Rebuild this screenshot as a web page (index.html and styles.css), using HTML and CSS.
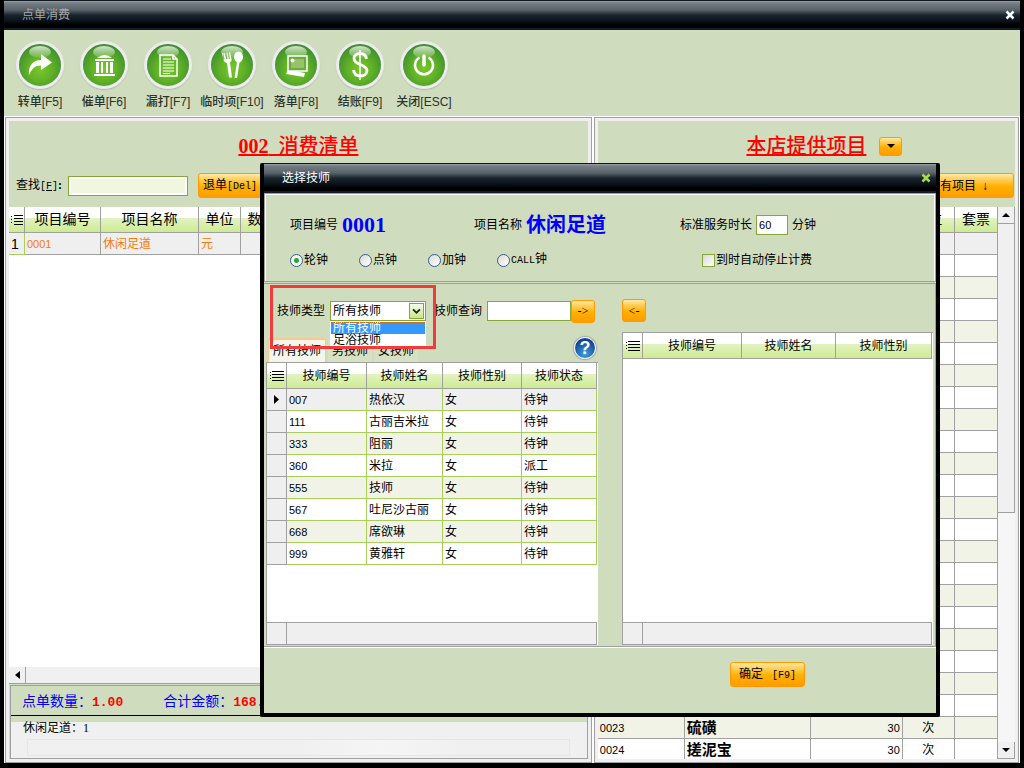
FILE: index.html
```html
<!DOCTYPE html>
<html lang="zh-CN">
<head>
    <meta charset="UTF-8">
    <title>点单消费</title>
    <link rel="stylesheet" href="styles.css">
</head>
<body>

<div class="app">
    <header class="titlebar">
        <h1>点单消费</h1>
        <button class="close" aria-label="关闭窗口">
            <svg width="10" height="10" viewBox="0 0 10 10"><path d="M1.5 1.5l7 7M8.5 1.5l-7 7"/></svg>
        </button>
    </header>

    <nav class="toolbar">
        <button class="tool">
            <span class="orb">
                <svg width="42" height="42" viewBox="0 0 42 42"><path fill="#fff" d="M10 31c-1-9 4-15 12-15v-6l11 8.500-11 7.500v-4.500c-6 0-9 3-12 9.500z"/></svg>
            </span>
            转单[F5]
        </button>
        <button class="tool">
            <span class="orb">
                <svg width="42" height="42" viewBox="0 0 42 42" fill="#fff"><path d="M14 14q7.500-6 15 0zM12 15h19v2H12zM13 18h3v11h-3zM18 18h2v11h-2zM23 18h2v11h-2zM27 18h3v11h-3zM11 30h21v2H11z"/></svg>
            </span>
            催单[F6]
        </button>
        <button class="tool">
            <span class="orb">
                <svg width="42" height="42" viewBox="0 0 42 42" fill="none" stroke="#fff" stroke-width="1.500"><path d="M13 11h13l4 4v17H13zM26 11v4h4"/><path stroke-width="1.200" d="M16 15h8M16 18h11M16 21h11M16 24h11M16 27h11M16 29.500h7"/></svg>
            </span>
            漏打[F7]
        </button>
        <button class="tool">
            <span class="orb">
                <svg width="42" height="42" viewBox="0 0 42 42" fill="#fff"><path d="M11 9l1.500 7q1 3 3.500 3l2 14.500h3L19 18.500q2-1 1.500-3.500L19 8l-1 .300.800 6.700h-1L16.500 8.500l-1 .200 1 6.500h-1L13.500 9l-1 .200 1 6.500-1 .100L12 9z"/><ellipse cx="27.500" cy="13" rx="4.500" ry="5.500"/><path d="M26 18h2.500L26 34h-2.500z"/></svg>
            </span>
            临时项[F10]
        </button>
        <button class="tool">
            <span class="orb">
                <svg width="42" height="42" viewBox="0 0 42 42"><path fill="#fff" d="M13 26l-2 4 18 3 1-4z"/><path fill="#6cab3c" stroke="#fff" stroke-width="1.500" d="M13 12h19v15H13z"/><path fill="#94c46a" d="M16 15h13v9H16z"/><circle cx="17.500" cy="16.500" r="2" fill="#fff"/></svg>
            </span>
            落单[F8]
        </button>
        <button class="tool">
            <span class="orb">
                <svg width="42" height="42" viewBox="0 0 42 42" fill="none" stroke="#fff"><path stroke-width="1.500" d="M21 6v30"/><path stroke-width="2.800" d="M27.500 15c-.500-4-3-5.500-6.500-5.500-3.500 0-6 2-6 5 0 7 13 5.500 13 12 0 3.500-3 5.500-6.500 5.500-4 0-6.500-2-7-6"/></svg>
            </span>
            结账[F9]
        </button>
        <button class="tool">
            <span class="orb">
                <svg width="42" height="42" viewBox="0 0 42 42" fill="none" stroke="#fff"><path stroke-width="2.500" d="M16.500 13.500a9 9 0 1 0 9 0"/><path stroke-width="3.500" stroke-linecap="round" d="M21 12v9"/></svg>
            </span>
            关闭[ESC]
        </button>
    </nav>

    <main class="panels">
        <section class="panel">
            <div class="panel-head">
                <h2><b>002</b>&nbsp; 消费清单</h2>
                <div class="search">
                    <label for="find">查找<span class="mono">[<u>F</u>]</span><b>:</b></label>
                    <input id="find" type="text">
                    <button class="btn">退单<span class="mono">[Del]</span></button>
                </div>
            </div>
            <div class="grid-body">
                <table class="grid grid-main">
                    <colgroup><col class="w16"><col class="w76"><col class="w98"><col class="w42"><col class="w42"><col></colgroup>
                    <thead>
                        <tr>
                            <th><svg class="lines" width="12" height="12" viewBox="0 0 12 12"><path d="M0 2.500h1M0 5.500h1M0 8.500h1M3 1.500h9M3 4.500h9M3 7.500h9M3 10.500h9"/></svg></th>
                            <th>项目编号</th><th>项目名称</th><th>单位</th><th>数量</th><th></th>
                        </tr>
                    </thead>
                    <tbody>
                        <tr class="current"><td class="rowno">1</td><td class="num">0001</td><td>休闲足道</td><td>元</td><td></td><td></td></tr>
                    </tbody>
                </table>
            </div>
            <div class="hscroll"><button class="arrow" aria-label="向左滚动"><svg width="5" height="8" viewBox="0 0 5 8"><path d="M5 0v8L0 4z"/></svg></button></div>
            <div class="summary">
                <p class="totals">
                    <span>点单数量：<b>1.00</b></span>
                    <span>合计金额：<b>168.00</b></span>
                </p>
                <p class="detail">休闲足道：1</p>
                <div class="status"></div>
            </div>
        </section>

        <section class="panel">
            <div class="panel-head">
                <div class="shop">
                    <h2>本店提供项目</h2>
                    <button class="btn drop" aria-label="展开"><svg width="8" height="4" viewBox="0 0 8 4"><path d="M0 0h8L4 4z"/></svg></button>
                </div>
                <div class="search search-end">
                    <button class="btn all">所有项目 &nbsp;↓</button>
                </div>
            </div>
            <div class="items">
                <div class="grid-body">
                    <table class="grid grid-main">
                        <colgroup><col class="w86"><col class="w126"><col class="w92"><col class="w52"><col></colgroup>
                        <thead>
                            <tr><th>项目编号</th><th>项目名称</th><th>单价</th><th>单位</th><th>套票</th></tr>
                        </thead>
                        <tbody id="items"></tbody>
                    </table>
                </div>
                <div class="vscroll">
                    <button class="arrow" aria-label="向上滚动"><svg width="8" height="4" viewBox="0 0 8 4"><path d="M0 4h8L4 0z"/></svg></button>
                    <div class="thumb"></div>
                    <div class="track"></div>
                    <button class="arrow" aria-label="向下滚动"><svg width="8" height="4" viewBox="0 0 8 4"><path d="M0 0h8L4 4z"/></svg></button>
                </div>
            </div>
        </section>
    </main>
</div>

<div class="dialog" role="dialog" aria-labelledby="dialogTitle">
    <header class="titlebar">
        <h2 id="dialogTitle">选择技师</h2>
        <button class="close close-green" aria-label="关闭">
            <svg width="10" height="10" viewBox="0 0 10 10"><path d="M1.500 1.500l7 7M8.500 1.500l-7 7"/></svg>
        </button>
    </header>

    <form class="options">
        <div class="facts">
            <div>项目编号 <strong class="code">0001</strong></div>
            <div>项目名称 <strong>休闲足道</strong></div>
            <div class="duration">
                <label for="minutes">标准服务时长</label>
                <input id="minutes" class="num" type="text" value="60">
                <span>分钟</span>
            </div>
        </div>
        <div class="modes">
            <label><input type="radio" name="mode" checked>轮钟</label>
            <label><input type="radio" name="mode">点钟</label>
            <label><input type="radio" name="mode">加钟</label>
            <label><input type="radio" name="mode"><span><span class="mono">CALL</span>钟</span></label>
            <label class="autostop"><input type="checkbox">到时自动停止计费</label>
        </div>
    </form>

    <div class="picker">
        <div class="side side-left">
            <div class="filters">
                <label for="type">技师类型</label>
                <div class="combo">
                    <select id="type">
                        <option>所有技师</option>
                        <option>足浴技师</option>
                    </select>
                    <svg class="chevron" width="15" height="16" viewBox="0 0 15 16"><path d="M3.500 6l4 4 4-4"/></svg>
                    <ul class="list">
                        <li class="selected">所有技师</li>
                        <li>足浴技师</li>
                    </ul>
                </div>
                <label for="query">技师查询</label>
                <input id="query" type="text">
                <button class="btn move">-&gt;</button>
                <div class="marker"></div>
            </div>
            <div class="tabs">
                <button class="tab active">所有技师</button>
                <button class="tab">男技师</button>
                <button class="tab">女技师</button>
                <button class="help" aria-label="帮助">?</button>
            </div>
            <div class="tablebox">
                <table class="grid grid-staff">
                    <colgroup><col class="w20"><col class="w80"><col class="w76"><col class="w79"><col></colgroup>
                    <thead>
                        <tr>
                            <th><svg class="lines" width="14" height="12" viewBox="0 0 14 12"><path d="M0 2.500h1M0 5.500h1M0 8.500h1M2 1.500h12M2 4.500h12M2 7.500h12M2 10.500h12"/></svg></th>
                            <th>技师编号</th><th>技师姓名</th><th>技师性别</th><th>技师状态</th>
                        </tr>
                    </thead>
                    <tbody>
                        <tr><td><svg width="5" height="9" viewBox="0 0 5 9"><path d="M0 0v9l5-4.500z"/></svg></td><td class="num">007</td><td>热依汉</td><td>女</td><td>待钟</td></tr>
                        <tr><td></td><td class="num">111</td><td>古丽吉米拉</td><td>女</td><td>待钟</td></tr>
                        <tr><td></td><td class="num">333</td><td>阻丽</td><td>女</td><td>待钟</td></tr>
                        <tr><td></td><td class="num">360</td><td>米拉</td><td>女</td><td>派工</td></tr>
                        <tr><td></td><td class="num">555</td><td>技师</td><td>女</td><td>待钟</td></tr>
                        <tr><td></td><td class="num">567</td><td>吐尼沙古丽</td><td>女</td><td>待钟</td></tr>
                        <tr><td></td><td class="num">668</td><td>席欲琳</td><td>女</td><td>待钟</td></tr>
                        <tr><td></td><td class="num">999</td><td>黄雅轩</td><td>女</td><td>待钟</td></tr>
                    </tbody>
                </table>
                <div class="tablefoot"><span></span></div>
            </div>
        </div>

        <div class="side side-right">
            <div class="back">
                <button class="btn move">&lt;-</button>
            </div>
            <div class="tablebox">
                <table class="grid grid-staff">
                    <colgroup><col class="w20"><col class="w99"><col class="w94"><col></colgroup>
                    <thead>
                        <tr>
                            <th><svg class="lines" width="14" height="12" viewBox="0 0 14 12"><path d="M0 2.500h1M0 5.500h1M0 8.500h1M2 1.500h12M2 4.500h12M2 7.500h12M2 10.500h12"/></svg></th>
                            <th>技师编号</th><th>技师姓名</th><th>技师性别</th>
                        </tr>
                    </thead>
                </table>
                <div class="tablefoot"><span></span></div>
            </div>
        </div>
    </div>

    <footer class="actions">
        <button class="btn ok">确定 <span class="mono">&nbsp;[F9]</span></button>
    </footer>
</div>

<script>
    const items = {
        '0023': ['硫磺', 30, '次'],
        '0024': ['搓泥宝', 30, '次']
    };
    const body = document.getElementById('items');

    for (let i = 1; i <= 24; i++) {
        const code = String(i).padStart(4, '0');
        const [name, price, unit] = items[code] || ['', '', ''];
        const row = body.insertRow();
        [code, name, price, unit, ''].forEach(text => {
            row.insertCell().textContent = text;
        });
        row.cells[0].className = 'num';
        row.cells[2].className = 'num';
    }
</script>

</body>
</html>
```
FILE: styles.css
```css
* {
    box-sizing: border-box;
}

body {
    margin: 0;
    font-family: "Liberation Serif", "Noto Sans CJK SC", serif;
    font-size: 12px;
    line-height: 16px;
    color: #000;
    background: #000;
}

h1, h2, p, ul {
    margin: 0;
    padding: 0;
}

button, input, select {
    font: inherit;
    color: inherit;
    margin: 0;
    padding: 0;
}

.mono {
    font-family: "Liberation Mono", monospace;
    font-size: 10px;
}

.num {
    font-family: "Liberation Sans", sans-serif;
    font-size: 11px;
}

.app {
    display: flex;
    flex-direction: column;
    height: 100vh;
    border: solid #000;
    border-width: 0 4px 5px;
    background: #cfdcbd;
}

/* title bars */
.titlebar {
    display: flex;
    align-items: center;
    justify-content: space-between;
    height: 30px;
    flex: none;
    padding: 0 5px 0 18px;
    border-top: 1px solid #10161e;
    border-bottom: 2px solid #141c29;
    background: linear-gradient(#9aa1a9 0, #757d84 2px, #59626a 9px, #19252f 14px, #0b1219 20px, #000 24px);
}

.titlebar h1,
.titlebar h2 {
    font-size: 12px;
    font-weight: normal;
    color: #a3a7ab;
}

.close {
    display: flex;
    border: 0;
    background: none;
}

.close path {
    fill: none;
    stroke: #fff;
    stroke-width: 2.5;
}

.close-green path {
    stroke: #a8dc4a;
}

/* toolbar */
.toolbar {
    display: flex;
    flex: none;
    height: 86px;
    padding: 11px 4px 0;
}

.tool {
    display: flex;
    flex-direction: column;
    align-items: center;
    gap: 5px;
    width: 64px;
    border: 0;
    background: none;
    color: #2c3327;
    font-family: "Liberation Sans", "Noto Sans CJK SC", sans-serif;
    font-weight: 500;
    white-space: nowrap;
}

.orb {
    position: relative;
    width: 48px;
    height: 48px;
    border: 3px solid #ececee;
    border-radius: 50%;
    background: radial-gradient(circle at 50% 60%, #7ac62c 0, #62b426 35%, #3a8a30 80%, #22662a 100%);
    box-shadow: 0 1px 1px #b0b8a8;
}

.orb::before {
    content: "";
    position: absolute;
    top: 2px;
    left: 10px;
    width: 22px;
    height: 12px;
    border-radius: 50%;
    background: linear-gradient(rgba(255, 255, 255, 0.75), rgba(255, 255, 255, 0.1));
}

.orb svg {
    position: relative;
    display: block;
}

/* panels */
.panels {
    display: grid;
    grid-template-columns: 588fr 426fr;
    gap: 2px;
    flex: 1;
    min-height: 0;
    padding: 1px 1px 0;
    background: #fff;
}

.panel {
    display: flex;
    flex-direction: column;
    min-width: 0;
    min-height: 0;
    border: 1px solid #a0a0a0;
    outline: 3px solid #f0eff0;
    outline-offset: -4px;
    padding: 3px;
    background: #cfdcbd;
}

.panel-head {
    display: flex;
    flex-direction: column;
    justify-content: space-between;
    flex: none;
    height: 86px;
    padding: 12px 1px 9px;
}

.panel-head h2 {
    font-size: 20px;
    line-height: 26px;
    font-weight: 500;
    color: #f00;
    text-align: center;
    text-decoration: underline;
}

.shop {
    display: flex;
    align-items: center;
    justify-content: center;
    gap: 13px;
    padding-left: 36px;
}

.search {
    display: flex;
    align-items: center;
    height: 25px;
    padding-left: 6px;
}

.search label {
    width: 52px;
}

.search input {
    width: 120px;
    height: 20px;
    margin-right: 10px;
    border: 1px solid #84a736;
    background: #f1f7df;
    box-shadow: inset 0 0 0 2px #fff;
}

.search-end {
    justify-content: flex-end;
}

.btn {
    height: 25px;
    padding: 0 4px;
    border: 1px solid #ff9a00;
    border-radius: 3px;
    background: linear-gradient(#ffe9a8 0, #ffc845 30%, #ffb000 55%, #ff9c00 100%);
    white-space: nowrap;
}

.btn.all {
    width: 112px;
}

.btn.drop {
    display: flex;
    align-items: center;
    justify-content: center;
    width: 23px;
    height: 19px;
}

.btn.move {
    width: 24px;
    height: 23px;
    padding: 0;
}

.btn.ok {
    width: 75px;
}

/* data grids */
.grid {
    width: 100%;
    table-layout: fixed;
    border-spacing: 0;
    background: #fff;
}

.grid th,
.grid td {
    padding: 0 2px;
    border: solid #a0a0a0;
    border-width: 0 1px 1px 0;
    overflow: hidden;
    white-space: nowrap;
}

.grid th {
    height: 26px;
    padding: 0;
    font-weight: normal;
    background: linear-gradient(#fff 0, #fff 45%, #e3f2c3 45%, #cdec90 100%);
}

.grid td {
    height: 22px;
    text-align: left;
}

.grid tr:nth-child(odd) td {
    background: #f2f3e7;
}

.grid tr:first-child td {
    background: #efefef;
}

.grid-main th {
    font-size: 14px;
}

.grid .current td {
    color: #f47b0a;
}

.grid .current .rowno {
    font-family: "Liberation Sans", sans-serif;
    font-size: 14px;
    color: #000;
    border-color: #a8cf5a;
}

.grid-staff th:first-child,
.grid-staff td:first-child {
    padding: 0;
    text-align: center;
}

.grid-staff td:not(:first-child) {
    border-color: #a8cf5a;
}

.grid-staff tbody tr td:first-child {
    background: #efefef;
}

.lines {
    display: block;
    margin: 0 auto;
    stroke: #000;
}

#items td:nth-child(2) {
    font-size: 15px;
    font-weight: bold;
}

#items td:nth-child(3) {
    text-align: right;
}

#items td:nth-child(4) {
    text-align: center;
}

.w16 { width: 16px; }
.w20 { width: 20px; }
.w42 { width: 42px; }
.w52 { width: 52px; }
.w76 { width: 76px; }
.w79 { width: 79px; }
.w80 { width: 80px; }
.w86 { width: 87px; }
.w92 { width: 92px; }
.w94 { width: 94px; }
.w98 { width: 98px; }
.w99 { width: 99px; }
.w126 { width: 126px; }

.grid-body {
    flex: 1;
    min-width: 0;
    min-height: 0;
    overflow: hidden;
    background: #fff;
}

.items {
    display: flex;
    flex: 1;
    min-height: 0;
}

/* scroll bars */
.hscroll {
    display: flex;
    flex: none;
    height: 17px;
    border-bottom: 1px solid #a0a0a0;
    background: #f0f0f0;
}

.vscroll {
    display: flex;
    flex-direction: column;
    width: 17px;
    background: #f0f0f0;
}

.arrow {
    display: flex;
    align-items: center;
    justify-content: center;
    flex: none;
    width: 17px;
    height: 17px;
    border: solid #a0a0a0;
    border-width: 0 1px 1px 0;
    background: #f0f0f0;
}

.hscroll .arrow {
    height: 16px;
    border-bottom: 0;
}

.thumb {
    flex: 29;
    border: solid #a0a0a0;
    border-width: 0 1px 1px 0;
}

.track {
    flex: 23;
    background: #f6f6f6;
}

/* totals under the order list */
.summary {
    flex: none;
    margin: 1px 0 0 1px;
    border: 1px solid #a0a0a0;
    background: #f0f0f0;
}

.totals {
    display: flex;
    gap: 40px;
    height: 30px;
    padding-left: 11px;
    border-bottom: 1px solid #000;
    background: #cfdcbd;
    font-size: 14px;
    line-height: 31px;
    color: #00f;
}

.totals b {
    font-family: "Liberation Mono", monospace;
    font-size: 13px;
    color: #f00;
}

.detail {
    padding-left: 12px;
    border-top: 6px solid #cfdcbd;
    line-height: 13px;
}

.status {
    height: 17px;
    margin: 4px 17px 2px 16px;
    border: 1px solid #e6e6e6;
    background: linear-gradient(90deg, #f0f0f0 50%, #f5f5f5 65%, #f0f0f0 80%);
}

/* dialog */
.dialog {
    position: absolute;
    top: 163px;
    left: 260px;
    display: flex;
    flex-direction: column;
    width: 680px;
    height: 554px;
    border: solid #000;
    border-width: 0 4px 4px;
    border-radius: 2px;
    background: #cfdcbd;
}

.dialog .titlebar h2 {
    color: #fff;
}

.options {
    flex: none;
    height: 89px;
    margin: 0;
    padding: 19px 4px 0 25px;
    border: 1px solid #a0a0a0;
    box-shadow: inset 1px 1px #fff, inset -1px 0 #fff;
}

.facts {
    display: grid;
    grid-template-columns: 184px 206px auto;
    align-items: center;
    height: 24px;
}

.facts > div {
    display: flex;
    align-items: center;
    gap: 4px;
}

.facts strong {
    font-size: 20px;
    line-height: 24px;
    color: #00f;
}

.facts .code {
    font-size: 22px;
}

.facts input {
    width: 32px;
    height: 20px;
    padding: 0 2px;
    border: 1px solid #84a736;
    background: #fff;
}

.modes {
    display: flex;
    align-items: center;
    margin-top: 15px;
}

.modes label {
    display: flex;
    align-items: center;
    gap: 1px;
    width: 69px;
    height: 16px;
}

.modes input {
    appearance: none;
    width: 13px;
    height: 13px;
    border: 1px solid #35608f;
    border-radius: 50%;
    background: linear-gradient(135deg, #d9d9d4, #fff);
}

.modes input:checked {
    background: radial-gradient(circle, #2fa52f 0, #2fa52f 2px, #f4f4f4 3px);
}

.modes .autostop {
    width: auto;
    margin-left: 136px;
}

.modes .autostop input {
    border-color: #84a736;
    border-radius: 0;
}

.picker {
    display: flex;
    gap: 24px;
    flex: 1;
    min-height: 0;
    padding: 1px 2px 1px;
    border: solid #a0a0a0;
    border-width: 1px 1px 1px 0;
    margin-top: 1px;
    box-shadow: 0 1px #fff;
}

.side {
    display: flex;
    flex-direction: column;
    min-width: 0;
    min-height: 0;
}

.side-left {
    flex: 0 0 332px;
}

.side-right {
    flex: 1;
}

.filters {
    position: relative;
    display: flex;
    align-items: center;
    flex: none;
    height: 52px;
    padding-left: 11px;
}

.filters > label {
    width: 53px;
}

.filters > input {
    flex: 1;
    min-width: 0;
    height: 20px;
    border: 1px solid #84a736;
    background: #fff;
}

.filters .move {
    margin-right: 3px;
}

.combo {
    position: relative;
    width: 96px;
    margin-right: 8px;
}

.combo select {
    appearance: none;
    display: block;
    width: 100%;
    height: 20px;
    padding: 0 2px;
    border: 1px solid #84a736;
    border-radius: 0;
    background: #fff;
}

.chevron {
    position: absolute;
    top: 2px;
    right: 2px;
    border: 1px solid #84a736;
    background: linear-gradient(#f6fbe8, #c8e68a);
    pointer-events: none;
}

.chevron path {
    fill: none;
    stroke: #222;
    stroke-width: 2;
}

.list {
    position: absolute;
    z-index: 2;
    top: 20px;
    left: 0;
    width: 100%;
    height: 26px;
    border: 1px solid #fff;
    overflow: hidden;
    list-style: none;
    background: #fff;
}

.list li {
    height: 12px;
    padding-left: 2px;
    line-height: 12px;
}

.list .selected {
    outline: 1px dotted #c87020;
    outline-offset: -1px;
    background: #3399ff;
    color: #fff;
}

.marker {
    position: absolute;
    z-index: 3;
    top: 0;
    left: 4px;
    width: 166px;
    height: 64px;
    border: 3px solid #f43b3b;
    pointer-events: none;
}

.tabs {
    display: flex;
    align-items: flex-end;
    gap: 2px;
    flex: none;
    height: 25px;
    padding-left: 2px;
}

.tab {
    height: 22px;
    padding: 0 4px;
    border: 0;
    background: #d6e1c4;
}

.tab.active {
    height: 24px;
    border: 1px solid #f7c98c;
    border-width: 2px 1px 0;
    border-radius: 3px 3px 0 0;
    background: #f4f6ec;
}

.help {
    width: 22px;
    height: 22px;
    margin: 0 2px 3px auto;
    border: 1px solid #fff;
    border-radius: 50%;
    background: radial-gradient(circle at 50% 80%, #3fa0e0, #12418f 75%);
    box-shadow: 0 0 1px 1px #9aa7b8;
    color: #fff;
    font-family: "Liberation Sans", sans-serif;
    font-size: 18px;
    font-weight: bold;
    line-height: 20px;
}

.back {
    display: flex;
    align-items: center;
    flex: none;
    height: 47px;
    padding-top: 4px;
}

.tablebox {
    display: flex;
    flex-direction: column;
    justify-content: space-between;
    flex: 1;
    min-height: 0;
    padding-right: 1px;
    border: solid #a0a0a0;
    border-width: 1px 0 0 1px;
    background: #fff;
}

.tablefoot {
    height: 23px;
    padding-left: 19px;
    border: 1px solid #a0a0a0;
    border-left: 0;
    background: #efefef;
}

.tablefoot span {
    display: block;
    height: 21px;
    border-left: 1px solid #a0a0a0;
}

.actions {
    display: flex;
    justify-content: flex-end;
    flex: none;
    height: 66px;
    padding: 15px 131px 0 0;
}
```
